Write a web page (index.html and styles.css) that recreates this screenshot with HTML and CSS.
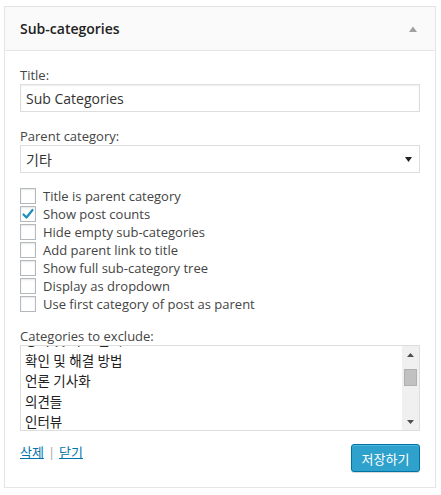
FILE: index.html
```html
<!DOCTYPE html>
<html lang="ko">
<head>
<meta charset="utf-8">
<title>Sub-categories widget</title>
<link rel="stylesheet" href="styles.css">
</head>
<body>
<div class="widget">
  <div class="widget-top">
    <h3 class="widget-title">Sub-categories</h3>
    <svg class="toggle" width="8" height="6" viewBox="0 0 8 6"><polygon points="0,6 4,0.5 8,6" fill="#a0a0a0"/></svg>
  </div>
  <div class="widget-inside">
    <div class="field field-title">
      <label class="lbl">Title:</label>
      <div class="text-input">Sub Categories</div>
    </div>
    <div class="field field-parent">
      <label class="lbl">Parent category:</label>
      <div class="select">
        <span>기타</span>
        <svg width="7" height="5" viewBox="0 0 7 5"><polygon points="0,0 7,0 3.5,5" fill="#222"/></svg>
      </div>
    </div>
    <ul class="checklist">
      <li><span class="cb"></span>Title is parent category</li>
      <li><span class="cb"><svg width="14" height="14" viewBox="0 0 14 14"><polyline points="2.5,7.5 5.5,10.5 11.5,3" fill="none" stroke="#1e8cbe" stroke-width="2.2" stroke-linecap="round" stroke-linejoin="round"/></svg></span>Show post counts</li>
      <li><span class="cb"></span>Hide empty sub-categories</li>
      <li><span class="cb"></span>Add parent link to title</li>
      <li><span class="cb"></span>Show full sub-category tree</li>
      <li><span class="cb"></span>Display as dropdown</li>
      <li><span class="cb"></span>Use first category of post as parent</li>
    </ul>
    <div class="field field-exclude">
      <label class="lbl">Categories to exclude:</label>
      <div class="multi">
        <div class="multi-view">
          <ul class="options">
            <li>공지 및 자료 안내</li>
            <li>확인 및 해결 방법</li>
            <li>언론 기사화</li>
            <li>의견들</li>
            <li>인터뷰</li>
          </ul>
        </div>
        <div class="scrollbar">
          <div class="sb-btn"><svg width="7" height="4" viewBox="0 0 7 4"><polygon points="0,4 3.5,0 7,4" fill="#505050"/></svg></div>
          <div class="sb-track"><div class="sb-thumb"></div></div>
          <div class="sb-btn"><svg width="7" height="4" viewBox="0 0 7 4"><polygon points="0,0 7,0 3.5,4" fill="#505050"/></svg></div>
        </div>
      </div>
    </div>
    <div class="actions">
      <div class="links"><a href="#">삭제</a><span class="sep">|</span><a href="#">닫기</a></div>
      <button class="btn-primary" type="button">저장하기</button>
    </div>
  </div>
</div>
</body>
</html>
```

FILE: styles.css
```css
html, body {
  margin: 0;
  padding: 0;
  background: #fff;
}
body {
  font-family: "Open Sans", "Noto Sans CJK KR", sans-serif;
  font-size: 13px;
  color: #444;
}
.widget {
  box-sizing: border-box;
  width: 432px;
  margin: 6px 0 0 4px;
  border: 1px solid #e5e5e5;
  box-shadow: 0 1px 1px rgba(0,0,0,0.04);
  background: #fff;
}
.widget-top {
  height: 43px;
  background: #fafafa;
  border-bottom: 1px solid #e5e5e5;
  display: flex;
  align-items: center;
  justify-content: space-between;
  padding: 0 18px 0 15px;
}
.widget-title {
  margin: 0;
  font-size: 14px;
  font-weight: 600;
  color: #222;
  line-height: 18px;
}
.toggle { display: block; }
.widget-inside {
  padding: 0 15px 15px;
}
.lbl {
  display: block;
  line-height: 18px;
}
.field-title { margin-top: 15px; }
.field-parent { margin-top: 15px; }
.field-exclude { margin-top: 14px; }
.text-input, .select {
  box-sizing: border-box;
  height: 28px;
  border: 1px solid #ddd;
  box-shadow: inset 0 1px 2px rgba(0,0,0,0.07);
  font-size: 14px;
  color: #333;
  padding: 0 7px 0 5px;
  display: flex;
  align-items: center;
}
.select {
  justify-content: space-between;
  box-shadow: none;
}
.select svg { display: block; }
.checklist {
  list-style: none;
  margin: 14px 0 0;
  padding: 0;
}
.checklist li {
  height: 18px;
  line-height: 18px;
  display: flex;
  align-items: center;
}
.cb {
  box-sizing: border-box;
  width: 16px;
  height: 16px;
  border: 1px solid #b4b9be;
  background: #fff;
  box-shadow: inset 0 1px 2px rgba(0,0,0,0.1);
  margin-right: 7px;
  display: flex;
  align-items: center;
  justify-content: center;
  flex: none;
}
.cb svg { display: block; }
.multi {
  box-sizing: border-box;
  height: 86px;
  border: 1px solid #ddd;
  display: flex;
  overflow: hidden;
}
.multi-view {
  flex: 1;
  overflow: hidden;
}
.options {
  list-style: none;
  margin: -16px 0 0;
  padding: 0 0 0 4px;
  font-size: 13.5px;
  color: #222;
}
.options li {
  height: 20.5px;
  line-height: 20.5px;
  white-space: nowrap;
}
.scrollbar {
  width: 17px;
  background: #f0f0f0;
  display: flex;
  flex-direction: column;
}
.sb-btn {
  height: 17px;
  display: flex;
  align-items: center;
  justify-content: center;
}
.sb-track {
  flex: 1;
}
.sb-thumb {
  box-sizing: border-box;
  width: 13px;
  height: 17px;
  margin: 6px auto 0;
  background: #c1c1c1;
  border: 1px solid #b0b0b0;
}
.actions {
  margin-top: 13px;
  display: flex;
  justify-content: space-between;
  align-items: flex-start;
}
.links {
  line-height: 17px;
  font-size: 13px;
}
.links a {
  color: #0073aa;
  text-decoration: underline;
}
.sep {
  color: #a0a5aa;
  margin: 0 4px;
}
.btn-primary {
  box-sizing: border-box;
  height: 28px;
  width: 69px;
  padding: 0;
  border: 1px solid #0074a2;
  border-radius: 3px;
  background: #2ea2cc;
  color: #fff;
  font-family: "Open Sans", "Noto Sans CJK KR", sans-serif;
  font-size: 13px;
  box-shadow: inset 0 1px 0 rgba(120,200,230,0.5), 0 1px 0 rgba(0,0,0,0.15);
  cursor: pointer;
}
```
